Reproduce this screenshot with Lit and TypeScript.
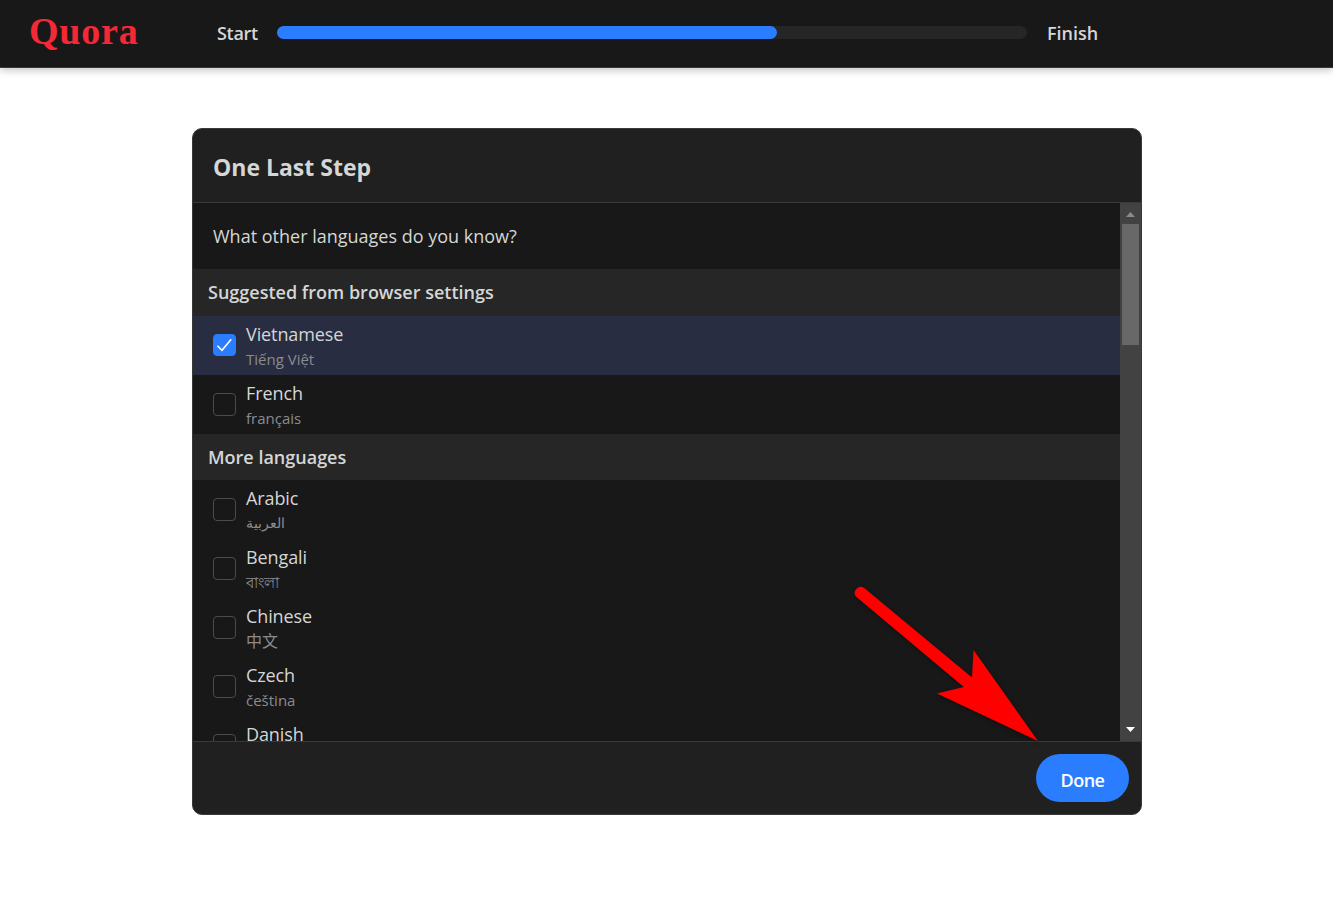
import { LitElement, html, css, svg, nothing } from "lit";
import { customElement, property } from "lit/decorators.js";

interface Language {
  name: string;
  native: string;
  checked?: boolean;
  lang: string;
}

const suggested: Language[] = [
  { name: "Vietnamese", native: "Tiếng Việt", checked: true, lang: "vi" },
  { name: "French", native: "français", lang: "fr" },
];

const more: Language[] = [
  { name: "Arabic", native: "العربية", lang: "ar" },
  { name: "Bengali", native: "বাংলা", lang: "bn" },
  { name: "Chinese", native: "中文", lang: "zh" },
  { name: "Czech", native: "čeština", lang: "cs" },
  { name: "Danish", native: "dansk", lang: "da" },
];

@customElement("language-row")
class LanguageRow extends LitElement {
  @property({ attribute: false }) item!: Language;

  static styles = css`
    :host { display: block; }
    .row {
      display: flex;
      align-items: flex-start;
      gap: 10px;
      height: 59px;
      box-sizing: border-box;
      padding: 6px 0 0 20px;
    }
    .on { background: #282d42; }
    .box {
      width: 23px;
      height: 23px;
      margin-top: 12px;
      box-sizing: border-box;
      border: 1px solid #4b4b4b;
      border-radius: 4px;
      display: flex;
    }
    .box.tick { background: #2a7dff; border-color: #2a7dff; height: 22px; }
    .box svg { width: 21px; height: 20px; display: block; }
    .text { display: flex; flex-direction: column; align-items: flex-start; }
    .name { font-size: 18px; line-height: 25px; letter-spacing: -0.1px; color: #d5d6d6; }
    .native { font-size: 15px; line-height: 24px; color: #8b8c8e; }
    .ar { font-size: 13.5px; }
    .bn { font-size: 15px; }
    .zh { font-size: 16px; }
  `;

  render() {
    const { name, native, checked, lang } = this.item;
    return html`<div class="row ${checked ? "on" : ""}">
      <span class="box ${checked ? "tick" : ""}">
        ${checked
          ? html`<svg viewBox="0 0 21 20">${svg`<path d="M3.4 10.7 L8 15.3 L17.2 4.2" fill="none" stroke="#fff" stroke-width="1.6"/>`}</svg>`
          : nothing}
      </span>
      <div class="text">
        <span class="name">${name}</span>
        <span class="native ${lang}" lang=${lang}>${native}</span>
      </div>
    </div>`;
  }
}

@customElement("app-root")
class AppRoot extends LitElement {
  static styles = css`
    :host {
      display: block;
      height: 898px;
      position: relative;
      overflow: hidden;
      background: #fff;
      color: #d5d6d6;
      font-family: "Open Sans", "Noto Sans", "Noto Sans CJK SC", sans-serif;
    }
    .top {
      display: flex;
      align-items: flex-start;
      height: 68px;
      box-sizing: border-box;
      padding-left: 29px;
      background: #181818;
      border-bottom: 1px solid #393839;
      box-shadow: 0 2px 8px rgba(0, 0, 0, 0.25);
    }
    .logo {
      width: 188px;
      padding-top: 8px;
      font: bold 38px/46px "Liberation Serif", serif;
      letter-spacing: 0.8px;
      color: #f52936;
    }
    .step { font-size: 18px; font-weight: 600; line-height: 26px; padding-top: 20px; }
    .start { width: 60px; letter-spacing: -0.3px; }
    .track { width: 750px; height: 13px; margin: 26px 20px 0 0; border-radius: 7px; background: #262626; }
    .fill { height: 100%; border-radius: 7px; background: #2a7dff; }
    .card {
      width: 950px;
      height: 687px;
      box-sizing: border-box;
      margin: 60px 0 0 192px;
      border: 1px solid #393939;
      border-radius: 10px;
      overflow: hidden;
      background: #202020;
      display: flex;
      flex-direction: column;
    }
    .title {
      height: 74px;
      box-sizing: border-box;
      padding: 22px 20px 0;
      border-bottom: 1px solid #393939;
      font-size: 23px;
      line-height: 32px;
      font-weight: 700;
    }
    .body { display: flex; height: 538px; background: #181818; }
    .list { flex: 1; height: 538px; overflow: hidden; }
    .question { height: 66px; box-sizing: border-box; padding: 20px 20px 0; font-size: 18px; line-height: 26px; }
    .section { height: 47px; box-sizing: border-box; padding: 10px 15px 0; background: #262626; font-size: 18px; line-height: 26px; font-weight: 600; }
    .section.short { height: 46px; }
    .bar { width: 21px; height: 538px; box-sizing: border-box; background: #424242; display: flex; flex-direction: column; align-items: center; padding-right: 1px; }
    .bar svg { width: 9px; height: 5px; display: block; }
    .up { margin-top: 9px; }
    .thumb { width: 17px; height: 121px; margin-top: 7px; background: #686868; }
    .down { margin: auto 0 9px; }
    .foot { flex: 1; border-top: 1px solid #393939; display: flex; justify-content: flex-end; padding: 12px 12px 0 0; }
    .done {
      width: 93px;
      height: 48px;
      border: 0;
      border-radius: 24px;
      padding: 3px 0 0;
      background: #2a7dff;
      color: #fff;
      font: 600 18px/26px "Open Sans", sans-serif;
      letter-spacing: -0.5px;
    }
    .arrow { position: absolute; left: 840px; top: 570px; width: 210px; height: 180px; filter: drop-shadow(1px 2px 2px rgba(0, 0, 0, 0.35)); }
  `;

  render() {
    return html`
      <header class="top">
        <div class="logo">Quora</div>
        <div class="step start">Start</div>
        <div class="track"><div class="fill" style="width:${(500 / 750) * 100}%"></div></div>
        <div class="step finish">Finish</div>
      </header>
      <main class="card">
        <div class="title"><span class="t">One Last Step</span></div>
        <div class="body">
          <div class="list">
            <div class="question"><span>What other languages do you know?</span></div>
            <div class="section"><span>Suggested from browser settings</span></div>
            ${suggested.map((l) => html`<language-row .item=${l}></language-row>`)}
            <div class="section short"><span>More languages</span></div>
            ${more.map((l) => html`<language-row .item=${l}></language-row>`)}
          </div>
          <div class="bar">
            <svg class="up" viewBox="0 0 9 5"><path d="M0 5 L4.5 0 L9 5Z" fill="#8b8b8b" /></svg>
            <div class="thumb"></div>
            <svg class="down" viewBox="0 0 9 5"><path d="M0 0 H9 L4.5 5Z" fill="#fff" /></svg>
          </div>
        </div>
        <div class="foot"><button class="done">Done</button></div>
      </main>
      <svg class="arrow" viewBox="0 0 210 180">
        <path d="M24.2 18 A6 6 0 0 0 16.2 26.8 L123.8 117 L97 123.5 L198 171 L133.5 80 L132 107.5 Z" fill="#f00" />
      </svg>
    `;
  }
}
